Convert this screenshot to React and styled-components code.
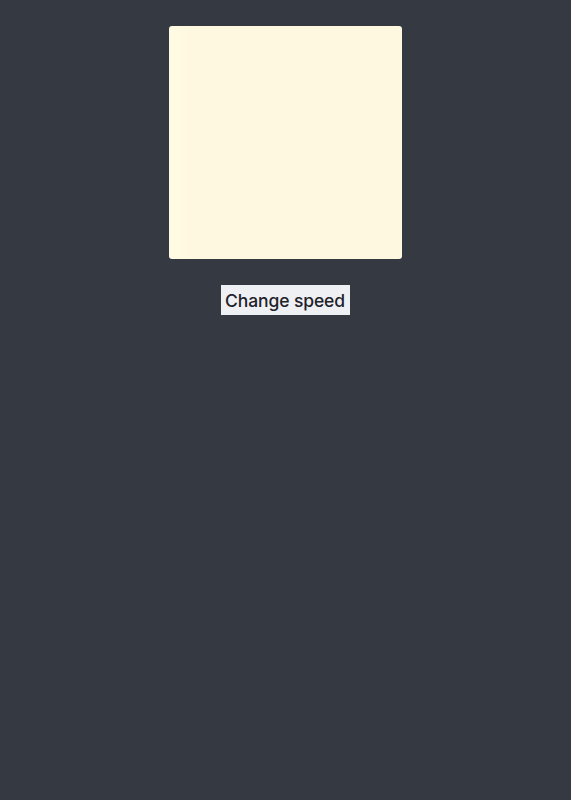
import styled, { createGlobalStyle } from 'styled-components';

const GlobalStyle = createGlobalStyle`
  html, body {
    margin: 0;
    padding: 0;
    background-color: #353942;
    min-height: 100%;
  }
`;

export default function App() {
  return (
    <>
      <GlobalStyle />
      <Layout>
        <Square />
        <SpeedButton type="button">Change speed</SpeedButton>
      </Layout>
    </>
  );
}

const Layout = styled.main`
  min-height: 800px;
  padding-top: 26px;
  box-sizing: border-box;

  display: flex;
  flex-direction: column;
  align-items: center;
  gap: 26px;
`;

const Square = styled.div`
  width: 233px;
  height: 233px;
  margin-left: -1px;
  border-radius: 3px;
  background: linear-gradient(90deg, #fffbe3 0%, #fff8e1 10%, #fff8e1 100%);
`;

const SpeedButton = styled.button`
  width: 129px;
  height: 30px;
  margin-left: -1px;
  padding: 1px 0 0;
  border: none;
  border-radius: 0;
  background-color: #eef0f4;
  color: #1e2229;
  font-family: Inter, 'Noto Sans', sans-serif;
  font-size: 17.5px;
  font-weight: 500;
  letter-spacing: -0.1px;
  cursor: pointer;
`;
